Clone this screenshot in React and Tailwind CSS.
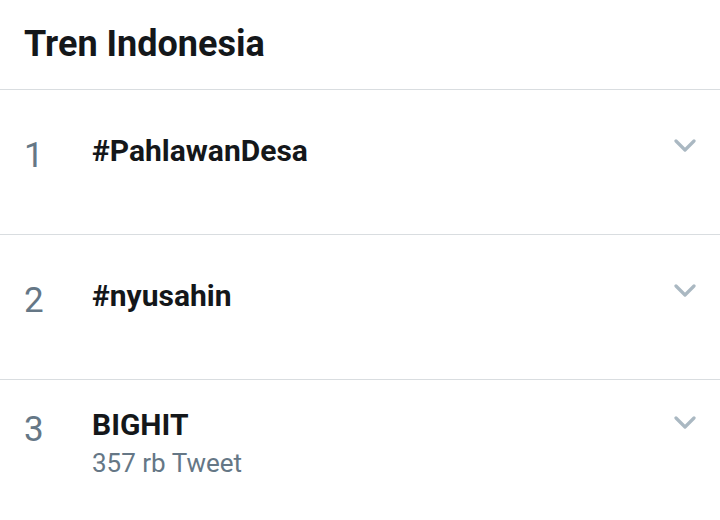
const trends = [
  { rank: 1, name: "#PahlawanDesa" },
  { rank: 2, name: "#nyusahin" },
  { rank: 3, name: "BIGHIT", count: "357 rb Tweet" },
];

const Chevron = ({ className }) => (
  <svg viewBox="0 0 22 14" className={className} fill="none" stroke="currentColor" strokeWidth="3.2" strokeLinecap="round" strokeLinejoin="round">
    <polyline points="2,2 11,11 20,2" />
  </svg>
);

const TrendRow = ({ rank, name, count }) => (
  <div className={`flex h-[145px] border-b border-[#d9dde0] pl-[24px] pr-[24px] ${count ? "pt-[28px]" : "pt-[44px]"}`}>
    <div className="w-[68px] text-[35px] leading-[40px] text-[#657786] mt-[2px]">{rank}</div>
    <div className="flex-1">
      <div className="text-[30px] leading-[34px] font-bold text-[#14171a]">{name}</div>
      {count && <div className="text-[26px] leading-[30px] mt-[6px] text-[#657786]">{count}</div>}
    </div>
    <Chevron className={`w-[22px] h-[14px] text-[#aab8c2] ${count ? "mt-[8px]" : "mt-[5px]"}`} />
  </div>
);

export default function App() {
  return (
    <div className="w-[720px] h-[520px] bg-white overflow-hidden" style={{ fontFamily: "Roboto, sans-serif" }}>
      <div className="h-[90px] border-b border-[#d9dde0] px-[24px] pt-[22px]">
        <h2 className="text-[36px] leading-[44px] font-bold text-[#14171a]">Tren Indonesia</h2>
      </div>
      {trends.map((t) => (
        <TrendRow key={t.rank} {...t} />
      ))}
    </div>
  );
}
